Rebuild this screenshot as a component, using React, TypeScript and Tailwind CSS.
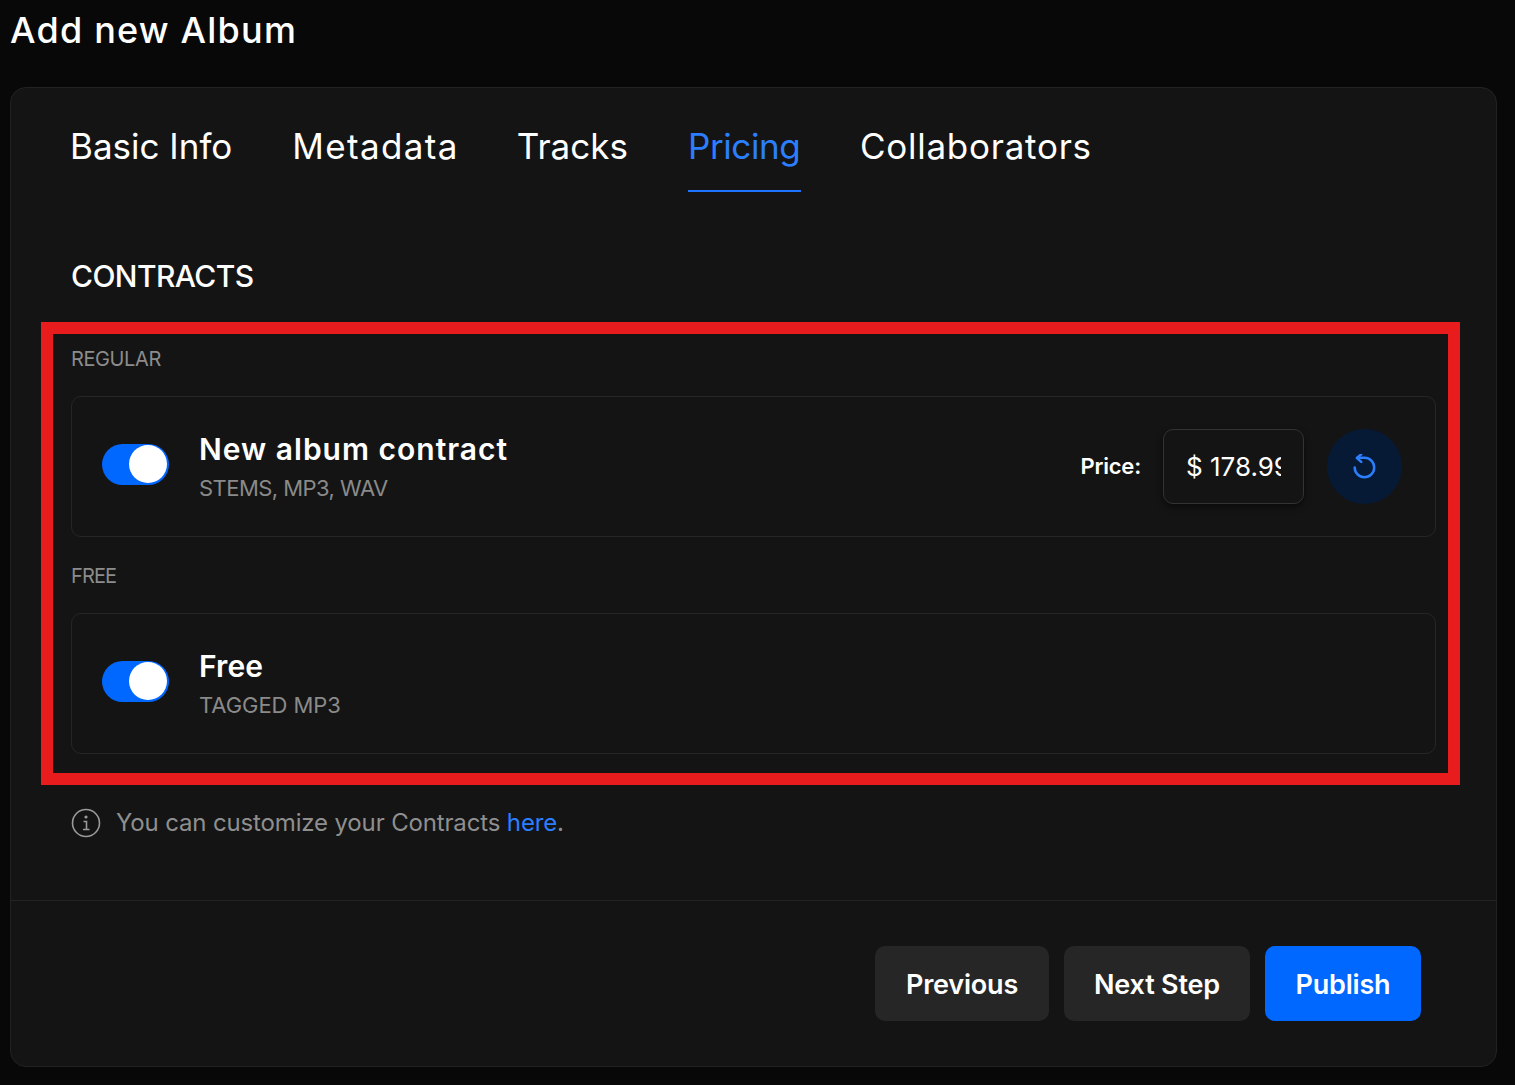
const tabs = [
  { label: "Basic Info", cls: "tracking-[0px] text-white" },
  { label: "Metadata", cls: "-mr-[2px] tracking-[1.35px] text-white" },
  { label: "Tracks", cls: "tracking-[0px] text-white" },
  { label: "Pricing", cls: "-mr-[1px] w-[113px] border-b-2 border-[#1f74ff] tracking-[-0.4px] text-[#2b7fff]" },
  { label: "Collaborators", cls: "tracking-[0.75px] text-white" },
];

function Toggle() {
  return (
    <div className="flex h-[41px] w-[67px] shrink-0 items-center justify-end rounded-full bg-[#0068ff] pr-[2px]">
      <div className="h-[38px] w-[38px] rounded-full bg-white" />
    </div>
  );
}

function ContractRow({
  title,
  titleCls,
  sub,
  subCls,
  children,
}: {
  title: string;
  titleCls: string;
  sub: string;
  subCls: string;
  children?: React.ReactNode;
}) {
  return (
    <div className="flex h-[141px] items-center rounded-[10px] border border-[#262626] pl-[30px] pr-[33px]">
      <div className="-mt-[5px]">
        <Toggle />
      </div>
      <div className="ml-[30px] flex-1">
        <div className={`text-[30px] leading-[40px] font-semibold text-white ${titleCls}`}>{title}</div>
        <div className={`mt-[3px] text-[22px] leading-[33px] text-[#8a8a8a] ${subCls}`}>{sub}</div>
      </div>
      {children}
    </div>
  );
}

export default function App() {
  return (
    <div className="h-[1085px] w-[1515px] overflow-hidden bg-[#080808] font-['Inter',sans-serif]">
      <div className="flex h-[87px] items-start pl-[10px] pt-[6px]">
        <h1 className="text-[36px] leading-[48px] font-medium tracking-[1.2px] text-white">Add new Album</h1>
      </div>
      <div className="relative ml-[10px] h-[980px] w-[1487px] rounded-[16px] border border-[#222222] bg-[#141414]">
        <div className="flex gap-[60px] pl-[59px] pt-[32px]">
          {tabs.map((t) => (
            <div key={t.label} className={`h-[72px] text-[35px] leading-[52px] ${t.cls}`}>
              {t.label}
            </div>
          ))}
        </div>

        <div className="mt-[64px] pl-[60px] text-[30px] leading-[40px] font-medium tracking-[-0.6px] text-white">CONTRACTS</div>

        <div className="mt-[48px] px-[60px]">
          <div className="text-[20px] leading-[30px] tracking-[-0.4px] text-[#8c8c8c]">REGULAR</div>
          <div className="mt-[22px]">
            <ContractRow title="New album contract" titleCls="tracking-[1px]" sub="STEMS, MP3, WAV" subCls="tracking-[-0.55px]">
              <span className="text-[22px] font-semibold tracking-[-0.2px] text-white">Price:</span>
              <input
                readOnly
                value="$ 178.99"
                className="ml-[22px] h-[75px] w-[141px] rounded-[10px] border border-[#333333] bg-[#141414] px-[22px] text-[26px] text-white shadow-[0_3px_6px_rgba(0,0,0,0.5)] outline-none"
              />
              <div className="ml-[23px] flex h-[75px] w-[75px] items-center justify-center rounded-full bg-[#061a36]">
                <svg width="26" height="26" viewBox="1 1.5 24 24" fill="none" stroke="#2b7fff" strokeWidth="2.3" strokeLinecap="round" strokeLinejoin="round">
                  <path d="M3.5 14A9 9 0 1 0 12.5 5H6" />
                  <path d="M9.5 1.8L5.5 5.2L9.5 8.8" />
                </svg>
              </div>
            </ContractRow>
          </div>
          <div className="mt-[24px] text-[20px] leading-[30px] tracking-[-0.9px] text-[#8c8c8c]">FREE</div>
          <div className="mt-[22px]">
            <ContractRow title="Free" titleCls="tracking-[0.1px]" sub="TAGGED MP3" subCls="tracking-[-0.05px]" />
          </div>
        </div>

        <div className="mt-[51px] flex items-center pl-[60px]">
          <svg width="30" height="30" viewBox="0 0 30 30" fill="none" stroke="#9a9a9a" strokeWidth="1.6">
            <circle cx="15" cy="15" r="13.5" />
            <path d="M12.5 13.5h3v8M12 21.5h6.5" />
            <circle cx="15" cy="9" r="0.8" fill="#9a9a9a" />
          </svg>
          <span className="ml-[15px] text-[24px] leading-[36px] tracking-[-0.15px] text-[#8f8f8f]">
            You can customize your Contracts <span className="text-[#2b7fff]">here</span>.
          </span>
        </div>

        <div className="mt-[59px] border-t border-[#222222]" />

        <div className="flex justify-end gap-[15px] pr-[75px] pt-[45px]">
          <button className="h-[75px] w-[174px] rounded-[10px] bg-[#262626] pt-[3px] text-[27px] font-semibold tracking-[-0.2px] text-white">Previous</button>
          <button className="h-[75px] w-[186px] rounded-[10px] bg-[#262626] pt-[3px] text-[27px] font-semibold tracking-[-0.2px] text-white">Next Step</button>
          <button className="h-[75px] w-[156px] rounded-[10px] bg-[#0068ff] pt-[3px] text-[27px] font-semibold tracking-[-0.2px] text-white">Publish</button>
        </div>

        {/* annotation box drawn over the screenshot */}
        <div className="pointer-events-none absolute left-[30px] top-[234px] h-[463px] w-[1419px] border-[12px] border-[#e81c1c]" />
      </div>
    </div>
  );
}
